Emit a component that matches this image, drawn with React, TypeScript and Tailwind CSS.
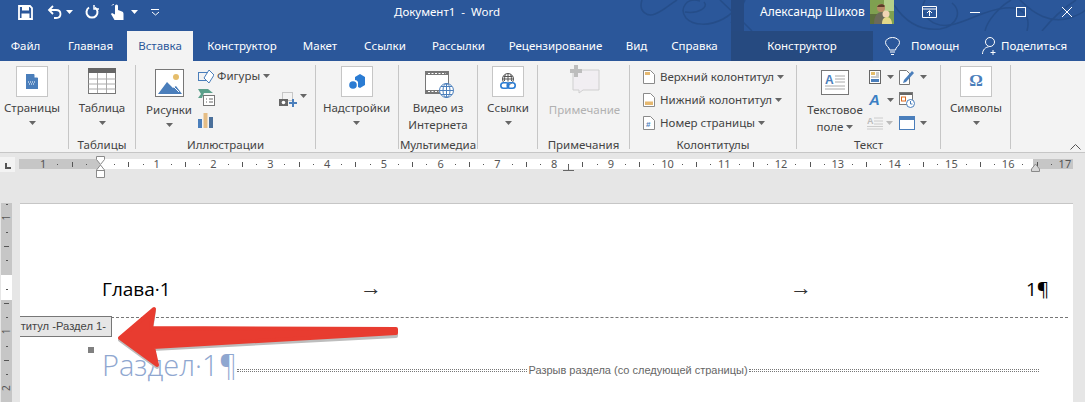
import type { ReactNode } from 'react'

function Caret({ className = '', light = false }: { className?: string; light?: boolean }) {
  return (
    <svg width="7" height="4" viewBox="0 0 7 4" className={`shrink-0 ${className}`}>
      <path d="M0 0h7L3.5 4z" fill={light ? '#fff' : '#666'} />
    </svg>
  )
}

function IconBox({ children }: { children: ReactNode }) {
  return <div className="flex h-[31px] w-[32px] items-center justify-center border border-[#c6c6c6] bg-white">{children}</div>
}

function Big({ icon, label, caret = true, className = '' }: { icon: ReactNode; label: ReactNode; caret?: boolean; className?: string }) {
  return (
    <div className={`flex flex-col items-center ${className}`}>
      <div className="flex h-[32px] items-center justify-center">{icon}</div>
      <div className="flex h-[22px] items-center whitespace-nowrap">{label}</div>
      {caret && <Caret className="mt-[2px]" />}
    </div>
  )
}

function Group({ width, label, children, className = '' }: { width: string; label?: string; children: ReactNode; className?: string }) {
  return (
    <div className={`flex h-[84px] shrink-0 flex-col border-r border-[#c6c6c6] ${width}`}>
      <div className={`flex h-[72px] shrink-0 ${className}`}>{children}</div>
      <div className="flex h-[15px] shrink-0 items-center justify-center whitespace-nowrap">{label}</div>
    </div>
  )
}

function Row({ icon, text }: { icon: ReactNode; text: string }) {
  return (
    <div className="flex h-[23px] items-center">
      <div className="flex w-[17px] justify-start">{icon}</div>
      <span className="whitespace-nowrap">{text}</span>
      <Caret className="ml-[3px]" />
    </div>
  )
}

function PageIcon({ band, mark }: { band?: 'top' | 'bottom'; mark?: boolean }) {
  return (
    <svg width="12" height="14" viewBox="0 0 12 14">
      <path d="M.5.5h7l4 4v9H.5z" fill="#fff" stroke="#8a8a8a" />
      {band === 'top' && <rect x="2" y="2" width="5" height="3" fill="#e5b870" />}
      {band === 'bottom' && <rect x="2" y="8.5" width="8" height="3.5" fill="#e5b870" />}
      {mark && <text x="3" y="11" fontSize="8" fontWeight="700" fill="#4a7ebb" fontFamily="Liberation Sans, sans-serif">#</text>}
    </svg>
  )
}

function TopRuler() {
  const ticks = Array.from({ length: 76 }, (_, i) => i - 4)
  return (
    <svg width="1054" height="30" viewBox="19 155 1054 30" className="block">
      <rect x="19" y="159" width="1054" height="10" fill="#c6c6c6" />
      <rect x="100" y="159" width="933" height="10" fill="#fff" />
      {ticks.map((t) => {
        const x = 100 + t * 14.19
        if (t === 0 || x > 1072) return null
        if (t % 4 === 0) {
          return (
            <text key={t} x={x} y="168" textAnchor="middle" fontSize="11" fill="#555" fontFamily="Noto Sans, sans-serif">
              {Math.abs(t / 4)}
            </text>
          )
        }
        return t % 2 === 0 ? (
          <rect key={t} x={Math.round(x)} y="162" width="1" height="5" fill="#555" />
        ) : (
          <rect key={t} x={Math.round(x)} y="164" width="1" height="1" fill="#555" />
        )
      })}
      <path d="M96.5 156.500h8v3l-4 5-4-5zM100.500 165l4 5v7.500h-8V170z" fill="#fff" stroke="#8a8a8a" />
      <path d="M96.500 170.500h8" stroke="#8a8a8a" />
      <path d="M1035.500 164l-4 5v2.500h8V169z" fill="#d8d8d8" stroke="#8a8a8a" />
      <path d="M568.500 165v5M563 170.500h11" stroke="#666" />
    </svg>
  )
}

function SideRuler() {
  const ticks = Array.from({ length: 14 }, (_, i) => i - 5)
  return (
    <svg width="20" height="199" viewBox="0 203 20 199" className="block shrink-0">
      <rect x="1" y="203" width="11" height="199" fill="#c6c6c6" />
      <rect x="1" y="275" width="11" height="25" fill="#fff" />
      {ticks.map((t) => {
        const y = 274.500 + t * 14.2
        if (t === 0) return null
        if (t % 4 === 0) {
          return (
            <text key={t} x="7" y={y + 3} textAnchor="middle" fontSize="10" fill="#555" transform={`rotate(-90 7 ${y})`} fontFamily="Noto Sans, sans-serif">
              {Math.abs(t / 4)}
            </text>
          )
        }
        return t % 2 === 0 ? (
          <rect key={t} x="4" y={Math.round(y)} width="5" height="1" fill="#555" />
        ) : (
          <rect key={t} x="6" y={Math.round(y)} width="2" height="1" fill="#555" />
        )
      })}
    </svg>
  )
}

function Swirls() {
  return (
    <svg width="1085" height="31" viewBox="0 0 1085 31" className="absolute top-0 left-0" fill="none" stroke="#234a84" strokeWidth="1.500" opacity="0.75">
      <path d="M642 0c-4 12 6 17 13 14 10-4 15-10 22-14" />
      <path d="M700 1c-14-4-21 8-14 17 7 8 24 8 37 1 8-4 14-11 19-19" />
      <path d="M685 12c14 2 24-5 19-10" />
      <path d="M720 0l24 23 8 8" />
      <path d="M731 23c6-6 10-14 14-23" />
      <path d="M894 5c12 18 28 26 46 24 18-3 22-18 12-26" />
      <path d="M925 0c-8 14 8 30 30 24 18-5 30-14 50-16 18-2 26 8 22 23" />
      <path d="M985 31c2-10 14-24 26-31" />
      <path d="M1020 0c14 14 30 24 50 18 8-3 14-6 15-8" />
      <path d="M1042 31c8-10 20-22 34-31" />
    </svg>
  )
}

export default function App() {
  return (
    <div className="relative h-[402px] w-[1085px] overflow-hidden bg-[#e6e6e6] text-[11.5px] text-[#444]" style={{ fontFamily: '"Noto Sans", sans-serif' }}>
      {/* title bar */}
      <header className="relative flex h-[31px] items-center bg-[#2b579a] pb-[7px] text-white">
        <Swirls />
        <div className="absolute top-0 left-[731px] h-[31px] w-[13px] bg-[#264a82]" />
        <svg width="15" height="15" viewBox="0 0 15 15" className="relative ml-[18px]">
          <path d="M1 1h11l2 2v11H1z" fill="none" stroke="#fff" strokeWidth="1.800" />
          <path d="M4 1.500h7v4H4z" fill="#fff" />
          <path d="M3.500 8.500h8V14h-8z" fill="#fff" />
        </svg>
        <svg width="16" height="14" viewBox="0 0 16 14" className="relative ml-[14px]" fill="none" stroke="#fff" strokeWidth="1.800">
          <path d="M6 1L2 5l4 4" />
          <path d="M2 5h7c6 0 6 8 0 8H7" />
        </svg>
        <Caret light className="relative ml-[3px]" />
        <svg width="14" height="14" viewBox="0 0 14 14" className="relative ml-[12px]" fill="none" stroke="#fff" strokeWidth="2">
          <path d="M4 2.500a5.500 5.500 0 1 0 6 0" />
          <path d="M3 0v4.500H8" strokeWidth="1.500" transform="translate(6 -0.500)" />
        </svg>
        <svg width="13" height="16" viewBox="0 0 13 16" className="relative ml-[12px]" fill="#fff">
          <path d="M4 6V2a1.500 1.500 0 0 1 3 0v4l4 1.500c1.500.6 1.500 1.500 1.500 3V16H3.500L0 10l1-1 3 1.500z" />
          <path d="M1 1.500A3 3 0 0 1 3 0" stroke="#fff" fill="none" />
        </svg>
        <Caret light className="relative ml-[7px]" />
        <svg width="9" height="7" viewBox="0 0 9 7" className="relative ml-[13px]" fill="none" stroke="#fff">
          <path d="M0 .5h8M1 3l3.500 3L8 3" />
        </svg>
        <span className="relative ml-[234px] w-[366px] whitespace-nowrap">Документ1&nbsp; -&nbsp; Word</span>
        <span className="relative w-[110px] text-[12px] whitespace-nowrap">Александр Шихов</span>
        <svg width="24" height="24" viewBox="0 0 24 24" className="relative self-start">
          <rect width="24" height="24" fill="#7fa050" />
          <rect x="14" width="10" height="11" fill="#b4cf8a" />
          <rect x="0" y="14" width="7" height="10" fill="#5c6f3c" />
          <circle cx="11" cy="8" r="4" fill="#b98a66" />
          <path d="M4 24c0-8 3-12 8-12s6 5 6 12z" fill="#6b6a5a" />
          <circle cx="16" cy="14" r="3.500" fill="#f0d4b4" />
          <path d="M12 24c0-5 2-7 5-7s5 3 5 7z" fill="#e3d98a" />
          <path d="M7 7c1-3 6-4 8-1l-1 1H8z" fill="#5a3d28" />
        </svg>
        <svg width="15" height="12" viewBox="0 0 15 12" className="relative ml-[28px]" fill="none" stroke="#fff">
          <path d="M.5.500h14v11H.5zM.5 3h14M7.500 10V5M5 7l2.500-2.500L10 7" />
        </svg>
        <div className="relative ml-[33px] h-[1px] w-[10px] bg-white" />
        <div className="relative ml-[36px] h-[10px] w-[10px] border border-white" />
        <svg width="10" height="10" viewBox="0 0 10 10" className="relative ml-[36px]" stroke="#fff">
          <path d="M0 0l10 10M10 0L0 10" />
        </svg>
      </header>

      {/* tabs */}
      <nav className="relative flex h-[30px] items-center bg-[#2b579a] text-white">
        <span className="w-[51px] text-center">Файл</span>
        <span className="w-[76px] pl-[3px] text-center">Главная</span>
        <span className="flex h-[30px] w-[66px] items-center justify-center bg-[#f3f3f3] text-[#2b579a]">Вставка</span>
        <span className="w-[98px] text-center">Конструктор</span>
        <span className="w-[58px] text-center">Макет</span>
        <span className="w-[72px] text-center">Ссылки</span>
        <span className="w-[75px] text-center">Рассылки</span>
        <span className="w-[119px] text-center">Рецензирование</span>
        <span className="w-[43px] text-center">Вид</span>
        <span className="w-[73px] text-center">Справка</span>
        <span className="flex h-[30px] w-[142px] items-center justify-center bg-[#264a80]">Конструктор</span>
        <svg width="15" height="19" viewBox="0 0 15 19" className="ml-[12px]" fill="none" stroke="#fff">
          <path d="M4.500 13c0-3-4-4-4-7.500a7 5 0 0 1 14 0c0 3.500-4 4.500-4 7.500zM5 15h5M6 17.500h3" />
        </svg>
        <span className="ml-[11px] w-[71px] whitespace-nowrap">Помощн</span>
        <svg width="16" height="18" viewBox="0 0 16 18" fill="none" stroke="#fff">
          <circle cx="8" cy="5" r="4.500" />
          <path d="M.5 17c0-4 3-7 6-7M11 13v5M8.500 15.500h5" />
        </svg>
        <span className="ml-[3px] whitespace-nowrap">Поделиться</span>
      </nav>

      {/* ribbon */}
      <section className="relative flex h-[92px] border-b border-[#c6c6c6] bg-[#f3f3f3] pt-[4px]">
        <Group width="w-[69px]" className="pl-[4px]">
          <Big
            className="w-[56px]"
            icon={
              <IconBox>
                <svg width="12" height="15" viewBox="0 0 12 15">
                  <path d="M0 0h8l4 4v11H0z" fill="#4a7ebb" />
                  <path d="M8.500 0v3.500H12" fill="#fff" />
                  <path d="M2 8h8M3 10h6" stroke="#fff" strokeDasharray="1 1" />
                </svg>
              </IconBox>
            }
            label="Страницы"
          />
        </Group>

        <Group width="w-[67px]" label="Таблицы" className="pl-[9px]">
          <Big
            className="w-[48px]"
            icon={
              <svg width="28" height="26" viewBox="0 0 28 26">
                <rect x=".5" y=".5" width="27" height="25" fill="#fff" stroke="#777" />
                <rect width="28" height="5" fill="#666" />
                <path d="M.5 11h27M.5 16h27M.5 21h27M9.500 5v20M18.500 5v20" stroke="#aaa" />
              </svg>
            }
            label="Таблица"
          />
        </Group>

        <Group width="w-[180px]" label="Иллюстрации" className="pl-[10px]">
          <div className="flex w-[46px] flex-col items-center">
            <svg width="29" height="28" viewBox="0 0 29 28" className="mt-[4px]">
              <rect x=".5" y=".5" width="28" height="27" fill="#fff" stroke="#777" />
              <circle cx="21" cy="8" r="3" fill="#e5bd6b" />
              <path d="M3 25l9-12 6 6 3-2 6 8z" fill="#4a7ebb" />
              <path d="M15 14l9 9" stroke="#fff" />
            </svg>
            <span className="mt-[5px] leading-[16px]">Рисунки</span>
            <Caret className="mt-[5px]" />
          </div>
          <div className="ml-[6px] flex flex-col">
            <div className="flex h-[22px] items-center">
              <svg width="16" height="15" viewBox="0 0 16 15" fill="none">
                <rect x=".5" y="3.500" width="9" height="8" stroke="#4a7ebb" />
                <path d="M11 1l5 5-5 8-5-5z" fill="#fff" stroke="#4a7ebb" />
              </svg>
              <span className="ml-[3px]">Фигуры</span>
              <Caret className="ml-[3px]" />
            </div>
            <svg width="17" height="17" viewBox="0 0 17 17" className="mt-[2px]">
              <path d="M0 0h10l5 4H6l-2 5H0l3-4z" fill="#5ba08b" />
              <rect x="5.500" y="6.500" width="11" height="10" fill="#fff" stroke="#777" />
              <path d="M8 10h1M11 10h4M8 13h1M11 13h4" stroke="#666" />
            </svg>
            <svg width="15" height="15" viewBox="0 0 15 15" className="mt-[7px]">
              <rect x="0" y="6" width="4" height="9" fill="#4a7ebb" />
              <rect x="5.500" y="0" width="4" height="15" fill="#e5bd85" />
              <rect x="11" y="4" width="4" height="11" fill="#4a6f9a" />
            </svg>
          </div>
          <div className="mt-[27px] ml-[9px] flex items-start">
            <svg width="18" height="15" viewBox="0 0 18 15">
              <rect x="3.500" y=".5" width="10" height="8" fill="none" stroke="#999" strokeDasharray="1 1" />
              <rect y="7" width="9" height="7" fill="#666" />
              <circle cx="4.500" cy="10.500" r="1.800" fill="#fff" />
              <path d="M14 7v8M10 11h8" stroke="#4a7ebb" strokeWidth="2" />
            </svg>
            <Caret className="mt-[2px] ml-[3px]" />
          </div>
        </Group>

        <Group width="w-[83px]" className="pl-[8px]">
          <Big
            className="w-[65px]"
            icon={
              <IconBox>
                <svg width="16" height="15" viewBox="0 0 16 15" fill="#2b7cd3">
                  <path d="M6 3l5-3 5 3v8l-5 3-2-1V8a4 4 0 0 0-3-2z" />
                  <circle cx="4" cy="11" r="3.800" />
                </svg>
              </IconBox>
            }
            label="Надстройки"
          />
        </Group>

        <Group width="w-[79px]" label="Мультимедиа" className="pl-[10px]">
          <div className="flex w-[58px] flex-col items-center">
            <svg width="29" height="27" viewBox="0 0 29 27" className="mt-[6px] ml-[3px]">
              <rect x=".5" y=".5" width="23" height="22" fill="#fff" stroke="#777" />
              <path d="M1 1h22v3H1zM1 19h22v3H1z" fill="#777" />
              <path d="M3 2.500h18M3 20.500h18" stroke="#fff" strokeDasharray="2 1.500" />
              <circle cx="21.500" cy="19.500" r="7" fill="#fff" stroke="#4a7ebb" />
              <path d="M14.500 19.500h14M21.500 12.500v14M16 15.500h11M16 23.500h11" stroke="#4a7ebb" />
              <ellipse cx="21.500" cy="19.500" rx="3.500" ry="7" fill="none" stroke="#4a7ebb" />
            </svg>
            <div className="mt-[1px] text-center leading-[17px] whitespace-nowrap">
              Видео из
              <br />
              Интернета
            </div>
          </div>
        </Group>

        <Group width="w-[60px]" className="pl-[9px]">
          <Big
            className="w-[42px]"
            icon={
              <IconBox>
                <svg width="16" height="17" viewBox="0 0 16 17" fill="none">
                  <circle cx="8" cy="6" r="5.500" stroke="#555" />
                  <path d="M2.500 6h11M8 .5v8M5.500 1.500c-1 1.500-1 5-1 6.500M10.500 1.500c1 1.500 1 5 1 6.500M3.500 3.500h9" stroke="#555" />
                  <rect x=".8" y="9.800" width="8" height="5.500" rx="2.700" fill="#fff" stroke="#2b7cd3" strokeWidth="1.600" />
                  <rect x="7.200" y="9.800" width="8" height="5.500" rx="2.700" stroke="#2b7cd3" strokeWidth="1.600" />
                </svg>
              </IconBox>
            }
            label="Ссылки"
          />
        </Group>

        <Group width="w-[92px]" label="Примечания" className="pl-[11px]">
          <div className="flex w-[71px] flex-col items-center">
            <svg width="31" height="29" viewBox="0 0 31 29">
              <path d="M4 5h26v20H14l-4 3v-3H4z" fill="#f1eef2" stroke="#cfcfcf" />
              <path d="M7 0v12M1 6h12" stroke="#bdbdbd" strokeWidth="4" />
            </svg>
            <span className="mt-[7px] whitespace-nowrap text-[#b1b1b1]">Примечание</span>
          </div>
        </Group>

        <Group width="w-[167px]" label="Колонтитулы" className="flex-col pl-[13px]">
          <Row icon={<PageIcon band="top" />} text="Верхний колонтитул" />
          <Row icon={<PageIcon band="bottom" />} text="Нижний колонтитул" />
          <Row icon={<PageIcon mark />} text="Номер страницы" />
        </Group>

        <Group width="w-[144px]" label="Текст" className="pl-[10px]">
          <div className="flex w-[56px] flex-col items-center">
            <svg width="28" height="25" viewBox="0 0 28 25" className="mt-[5px]">
              <rect x=".5" y=".5" width="27" height="24" fill="#fff" stroke="#777" />
              <text x="4" y="14" fontSize="12" fontWeight="700" fill="#4a7ebb" fontFamily="Liberation Sans, sans-serif">A</text>
              <path d="M14 6h10M14 9h10M14 12h10M4 16h20M4 19h20" stroke="#aaa" />
            </svg>
            <div className="mt-[6px] text-center leading-[17px] whitespace-nowrap">
              Текстовое
              <br />
              поле <Caret className="mb-[2px] inline" />
            </div>
          </div>
          <div className="ml-[6px] grid grid-cols-[30px_30px] grid-rows-[23px_23px_23px] items-center">
            <div className="flex items-center">
              <svg width="12" height="14" viewBox="0 0 12 14">
                <rect x=".5" y=".5" width="11" height="13" fill="#fff" stroke="#666" />
                <rect x="2" y="2" width="4" height="3" fill="#e5bd6b" />
                <path d="M7 3h3M7 5h3M2 7h8" stroke="#999" />
                <rect x="2" y="9" width="8" height="3" fill="#4a7ebb" />
              </svg>
              <Caret className="ml-[6px]" />
            </div>
            <div className="flex items-center">
              <svg width="16" height="16" viewBox="0 0 16 16">
                <path d="M.5 1.500h7l3 3v11H.5z" fill="#fff" stroke="#777" />
                <path d="M5 11l8-9 2 2-8 9-3 1z" fill="#4a7ebb" />
              </svg>
              <Caret className="ml-[5px]" />
            </div>
            <div className="flex items-center">
              <span className="w-[12px] text-[15px] leading-none font-bold text-[#3b7fc4] italic" style={{ fontFamily: '"Liberation Sans", sans-serif' }}>A</span>
              <Caret className="ml-[6px]" />
            </div>
            <div>
              <svg width="16" height="16" viewBox="0 0 16 16">
                <rect x=".5" y=".5" width="13" height="12" fill="#fff" stroke="#777" />
                <rect x="1" y="1" width="12" height="2" fill="#666" />
                <rect x="2.500" y="5" width="4" height="4" fill="none" stroke="#d9691e" />
                <circle cx="11.500" cy="11.500" r="4" fill="#fff" stroke="#4a7ebb" />
                <path d="M11.500 9v3h2" stroke="#4a7ebb" fill="none" />
              </svg>
            </div>
            <div className="flex items-center">
              <svg width="16" height="14" viewBox="0 0 16 14" className="-ml-[2px]">
                <text x="0" y="8" fontSize="9" fontWeight="700" fill="#bbb" fontFamily="Liberation Sans, sans-serif">A</text>
                <path d="M7 2h9M7 5h9M7 8h9M0 10.500h16M0 13h16" stroke="#ccc" />
              </svg>
              <Caret className="ml-[3px] opacity-40" />
            </div>
            <div className="flex items-center">
              <div className="h-[14px] w-[16px] border border-t-[4px] border-[#4a7ebb] bg-white" />
              <Caret className="ml-[5px]" />
            </div>
          </div>
        </Group>

        <Group width="w-[70px]" className="pl-[8px]">
          <Big
            className="w-[54px]"
            icon={
              <IconBox>
                <span className="text-[17px] font-bold text-[#4a7ebb]" style={{ fontFamily: '"Liberation Serif", serif' }}>Ω</span>
              </IconBox>
            }
            label="Символы"
          />
        </Group>

        <svg width="11" height="6" viewBox="0 0 11 6" className="absolute top-[83px] right-[4px]" fill="none" stroke="#555">
          <path d="M.5 5.500l5-5 5 5" />
        </svg>
      </section>

      {/* ruler strip */}
      <div className="flex h-[50px] items-start bg-[#e6e6e6]">
        <div className="mt-[4px] flex h-[15px] w-[15px] items-center justify-center bg-[#f3f3f3]">
          <div className="mt-[2px] h-[6px] w-[6px] border-b-2 border-l-2 border-[#555]" />
        </div>
        <div className="mt-[2px] ml-[4px]">
          <TopRuler />
        </div>
      </div>

      {/* document */}
      <div className="flex">
        <SideRuler />
        <main className="relative h-[199px] w-[1053px] shrink-0 border-t border-[#c6c6c6] bg-white pt-[71px] text-black" style={{ fontFamily: '"Open Sans", sans-serif' }}>
          <div className="flex h-[28px] items-center pl-[82px] text-[19px] whitespace-pre">
            <span className="w-[258px]">Глава·1</span>
            <span className="mb-[3px] w-[430px] text-[22px] leading-none text-[#333]" style={{ fontFamily: '"Liberation Sans", sans-serif' }}>→</span>
            <span className="mb-[3px] w-[236px] text-[22px] leading-none text-[#333]" style={{ fontFamily: '"Liberation Sans", sans-serif' }}>→</span>
            <span>1¶</span>
          </div>
          <div className="mt-[14px] mr-[5px] ml-[91px] border-t border-dashed border-[#777]" />
          <div className="mt-[30px] flex h-[32px] items-center pr-[34px] pl-[82px]">
            <span className="w-[135px] shrink-0 text-[29px] leading-none font-light whitespace-nowrap text-[#8fa7d0]">Раздел·1¶</span>
            <div className="mt-[12px] flex flex-1 items-center">
              <div className="h-[3px] flex-1 border-y border-dotted border-[#777]" />
              <span className="px-px text-[11px] whitespace-nowrap text-[#666]" style={{ fontFamily: '"Liberation Sans", sans-serif' }}>Разрыв раздела (со следующей страницы)</span>
              <div className="h-[3px] flex-1 border-y border-dotted border-[#777]" />
            </div>
          </div>
          <div className="absolute top-[112px] left-0 flex h-[21px] w-[92px] items-center justify-end border border-l-0 border-[#777] bg-[#e6e6e6] pr-[5px] text-[11.2px] whitespace-nowrap text-[#444]" style={{ fontFamily: '"Liberation Sans", sans-serif' }}>
            титул -Раздел 1-
          </div>
          <div className="absolute top-[143px] left-[68px] h-[6px] w-[6px] bg-[#808080]" />
        </main>
      </div>

      {/* red arrow */}
      <svg width="1085" height="402" viewBox="0 0 1085 402" className="pointer-events-none absolute top-0 left-0">
        <path d="M120 340L154 311L151 330L396 331L396 336L153 349L157 367Z" fill="#bdbdbd" stroke="#bdbdbd" strokeWidth="4" strokeLinejoin="round" />
        <path d="M120 338L154 309L151 328L396 329L396 333L153 347L157 365Z" fill="#e83c30" stroke="#e83c30" strokeWidth="4" strokeLinejoin="round" />
      </svg>
    </div>
  )
}
